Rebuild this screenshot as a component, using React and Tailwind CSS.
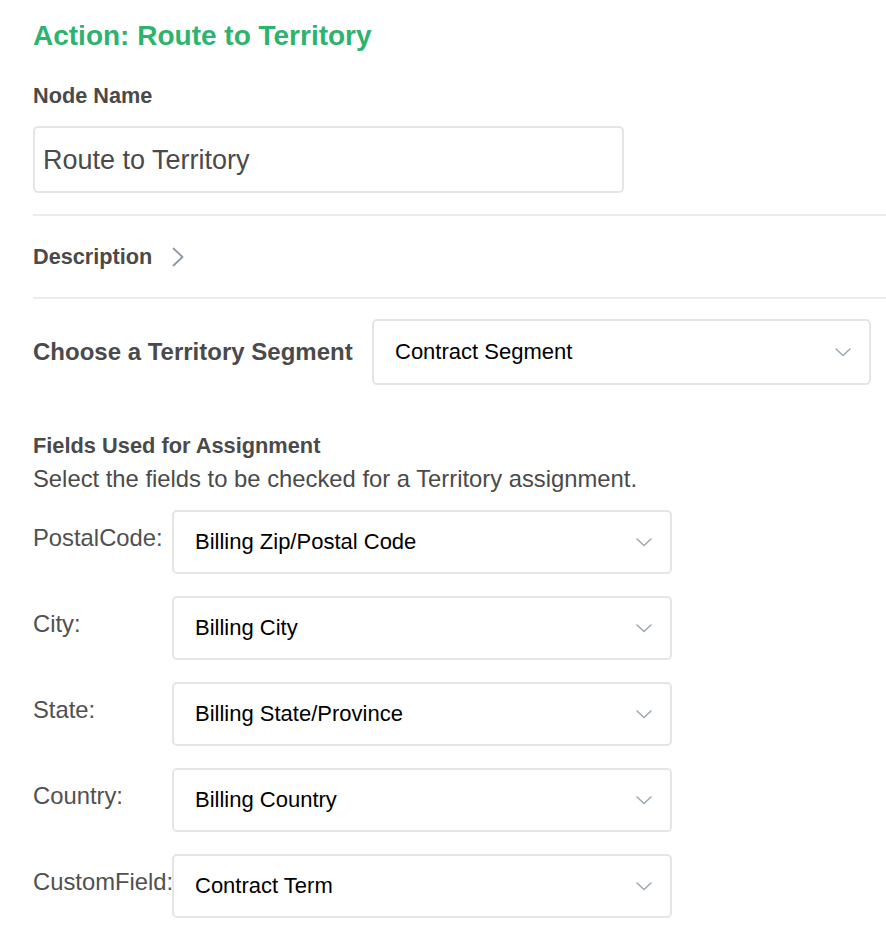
import React from "react";

function Chevron() {
  return (
    <svg width="16" height="9" viewBox="0 0 16 9" fill="none" className="shrink-0">
      <polyline points="1,1 8,7.5 15,1" stroke="#9ca6af" strokeWidth="1.5" strokeLinecap="round" strokeLinejoin="round" />
    </svg>
  );
}

function Select({ value, className = "" }) {
  return (
    <div className={`flex items-center justify-between border-2 border-[#e5e5e5] rounded-[5px] pl-[21px] pr-[18px] ${className}`}>
      <span className="text-[22px] leading-[28px] text-black">{value}</span>
      <Chevron />
    </div>
  );
}

const rows = [
  ["PostalCode:", "Billing Zip/Postal Code"],
  ["City:", "Billing City"],
  ["State:", "Billing State/Province"],
  ["Country:", "Billing Country"],
  ["CustomField:", "Contract Term"],
];

export default function App() {
  return (
    <div className="bg-white min-h-[934px] w-[886px] pl-[33px] pt-[20px]" style={{ fontFamily: '"Liberation Sans", Arial, sans-serif' }}>
      <h1 className="text-[28px] leading-[32px] font-bold text-[#2db36e]">Action: Route to Territory</h1>

      <div className="mt-[31px] text-[21.7px] leading-[26px] font-bold text-[#4a4a4a]">Node Name</div>

      <div className="mt-[17px] w-[591px] h-[67px] border-2 border-[#e5e5e5] rounded-[5px] flex items-center pl-[8px]">
        <span className="text-[27px] leading-[32px] text-[#4a4a4a]">Route to Territory</span>
      </div>

      <div className="mt-[21px] h-[2px] bg-[#ececec]" />

      <div className="h-[81px] flex items-center gap-[20px]">
        <span className="text-[21.7px] leading-[26px] font-bold text-[#4a4a4a]">Description</span>
        <svg width="12" height="20" viewBox="0 0 12 20" fill="none">
          <polyline points="1.5,1.5 10.5,10 1.5,18.5" stroke="#8d99a4" strokeWidth="1.8" strokeLinecap="round" strokeLinejoin="round" />
        </svg>
      </div>

      <div className="h-[2px] bg-[#ececec]" />

      <div className="mt-[20px] flex items-center gap-[21px]">
        <span className="w-[318px] shrink-0 text-[24px] leading-[28px] font-bold text-[#4a4a4a] whitespace-nowrap">Choose a Territory Segment</span>
        <Select value="Contract Segment" className="w-[499px] h-[66px]" />
      </div>

      <div className="mt-[48px] text-[21.8px] leading-[26px] font-bold text-[#4a4a4a]">Fields Used for Assignment</div>
      <div className="mt-[6px] text-[23.8px] leading-[28px] text-[#4a4a4a]">Select the fields to be checked for a Territory assignment.</div>

      <div className="mt-[17px] flex flex-col gap-[22px]">
        {rows.map(([label, value]) => (
          <div key={label} className="flex items-start">
            <span className="w-[139px] shrink-0 whitespace-nowrap pt-[14px] text-[23.8px] leading-[28px] text-[#505050]">{label}</span>
            <Select value={value} className="w-[500px] h-[64px]" />
          </div>
        ))}
      </div>
    </div>
  );
}
